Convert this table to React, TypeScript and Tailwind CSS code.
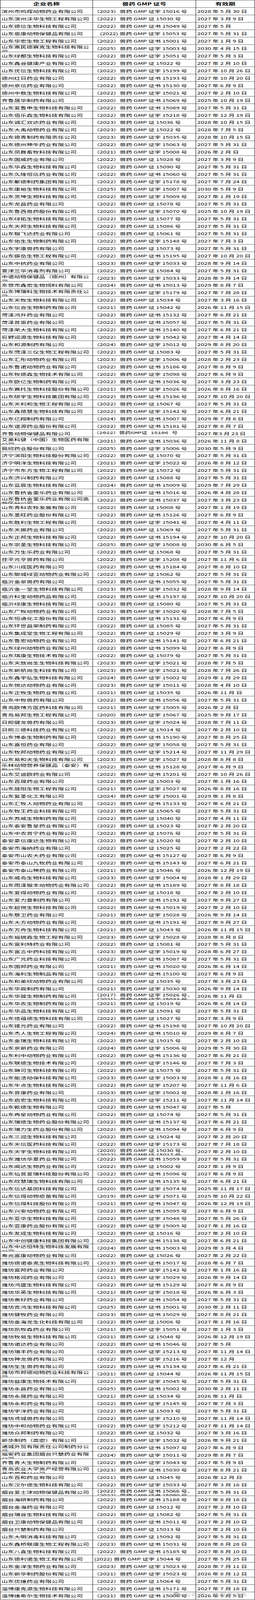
import { useLayoutEffect, useState } from "react";
import { FaWeixin } from "react-icons/fa";

// [企业名称, 证号, 有效期, 特殊样式]
// 证号简写: 年份 + 字/书/空 + 编号，例如 "2023字15016"
// 有效期简写: "2028.5.30"，"2027.5" 表示没有日，"2026.2." 表示日为空
type Row = [string, string, string, string?];

const rows: Row[] = [
  ["滨州市鸣辉动物药业有限公司", "2023字15016", "2028.5.30"],
  ["山东滨州沃华生物工程有限公司", "202215030", "2027.3.9"],
  ["山东德信生物科技有限公司", "2022书15049", "2027.5"],
  ["山东恩康动物保健品有限公司", "(2022) 兽药 GMP 证字 15053 号", "2027.5.31", "indent"],
  ["山东华宏生物工程有限公司", "2022书15001", "2027.1.9"],
  ["山东惠民德赛克生物科技有限公司", "2025字15003", "2030.4.15"],
  ["山东绿都生物科技有限公司", "2022字15051", "2027.5.3"],
  ["山东鑫谷健康产业有限公司", "202215022", "2027.2.10"],
  ["山东优信生物科技有限公司", "2022字15199", "2027.10.26"],
  ["德州红日药业有限公司", "2022书15193", "2027.10.20"],
  ["德州京信药业有限公司", "2022书15130", "2027.6.9"],
  ["德州中敖生物科技有限公司", "2022字15021", "2027.2.10"],
  ["齐鲁晟华制药有限公司", "2020书15069", "2025.10.19"],
  ["山东爱鲁申生物科技有限公司", "2022书15089", "2027.5.31"],
  ["山东佰乐森生物科技有限公司", "2022字15218", "2027.12.19"],
  ["山东诚汇双达药业有限公司", "202315036", "2028.10.15"],
  ["山东大禹动物药业有限公司", "202315022", "2028.7.5"],
  ["山东德青制药有限责任公司", "2023字15035", "2028.10.15"],
  ["山东德州神牛药业有限公司", "2022字15063", "2027.5.31"],
  ["山东凤舞畜牧科技有限公司", "2021字15008", "2026.2."],
  ["山东国威药业有限公司", "202215028", "2027.3.9"],
  ["山东华森生物科技有限公司", "202215090", "2027.5.31"],
  ["山东久隆恒信药业有限公司", "2022书15060", "2027.5.31"],
  ["山东聚德制药集团有限公司", "2022字15178", "2027.7.24"],
  ["山东康裕生物科技有限公司", "2025字15007", "2030.5.9"],
  ["山东灵坤生物科技有限公司", "2022字15009", "2027.1.19"],
  ["山东龙昌药业有限公司", "202215078", "2027.5.31"],
  ["山东鲁西兽药股份有限公司", "2020字15070", "2025.10.19"],
  ["山东绿拓生物科技有限公司", "202215077", "2027.5.31"],
  ["山东天邦生物科技有限公司", "202215086", "2027.5.31"],
  ["山东银飞达药业有限公司", "202215061", "2027.5.31"],
  ["山东佑生生物制药有限公司", "2022字15148", "2027.7.3"],
  ["山东宇康兽药有限公司", "202215073", "2027.5.31"],
  ["山东振岳生物工程有限公司", "2022书15195", "2027.10.20"],
  ["山东中抗药业有限公司", "2023字15033", "2028.9.14"],
  ["夏津兰华消毒剂有限公司", "202215084", "2027.5.31"],
  ["中诺动物保健品（德州）有限公司", "2023字15033", "2028.9.14"],
  ["东营市鑫宏生物饲料有限公司", "2024书15013", "2029.8.7"],
  ["山东博瑞科生物技术有限责任公司", "2022字15179", "2027.7.28"],
  ["山东天牧生物科技有限公司", "202215034", "2027.3.16"],
  ["山东信合生物制药有限公司", "202115042", "2026.11.15"],
  ["菏泽鸿升药业有限公司", "2022书15132", "2027.6.21"],
  ["菏泽普恩药业有限公司", "2022书15057", "2027.5.31"],
  ["菏泽荣大生物科技有限公司", "2022书15140", "2027.6.21"],
  ["巨野润源生物科技有限公司", "2022字15042", "2027.4.14"],
  ["山东和源制药有限公司", "2024字15012", "2029.8.20"],
  ["山东菏泽三仪生物工程有限公司", "202215083", "2027.5.31"],
  ["山东汇彤动物药业有限公司", "2023字15006", "2028.2.23"],
  ["山东鲁诺动物药业有限公司", "2022书15186", "2027.8.9"],
  ["山东牧德森生物技术有限公司", "2022字15098", "2027.6.9"],
  ["山东欧亿生物制药有限公司", "2022书15036", "2027.3.23"],
  ["山东赛托生物科技股份有限公司", "2021字15026", "2026.8.16"],
  ["山东硕宇生物科技集团有限公司", "2022书15196", "2027.10.20"],
  ["山东天利和生物工程有限公司", "202215067", "2027.5.31"],
  ["山东鑫德慧生物科技有限公司", "2022字15142", "2027.6.21"],
  ["山东亿翔制药有限公司", "2024书15007", "2029.7.8"],
  ["山东谊源药业股份有限公司", "2022书15181", "2027.8.7"],
  ["齐鲁动物保健品有限公司", "（2022）兽药GMP证 15106 号", "2027 年3 月 23 日", "mono"],
  ["艾美科健（中国）生物医药有限公司", "2021书15036", "2026.11.8"],
  ["辰欣药业股份有限公司", "2025字15006", "2030.5.9"],
  ["济宁滨阳生物科技股份有限公司", "202215070", "2027.5.31"],
  ["济宁明洋生物科技有限公司", "2021字15022", "2026.8.12"],
  ["济宁市东方生物工程有限公司", "202215072", "2027.5.31"],
  ["山东济兴制药有限公司", "202215088", "2027.5.31"],
  ["山东蓝辰生物科技有限公司", "2024书15009", "2029.7.29"],
  ["山东鲁抗舍里乐药业有限公司", "2021书15016", "2026.4.28"],
  ["山东鲁抗舍里乐药业有限公司高新区分公司", "2022书15037", "2027.3.23"],
  ["山东青科农牧发展有限公司", "202215008", "2027.1.19"],
  ["山东圣旺药业股份有限公司", "2022书15126", "2027.6.9"],
  ["山东胜利生物工程有限公司", "2022字15041", "2027.4.11"],
  ["山东天振药业有限公司", "202215069", "2027.5.31"],
  ["山东正邦生物科技有限公司", "2022书15194", "2027.10.20"],
  ["山东宗圣生物科技有限公司", "2025字15008", "2030.6.5"],
  ["山东万生乐药业有限公司", "202215068", "2027.5.31"],
  ["茌平元亨兽药有限公司", "2022字15208", "2027.11.6"],
  ["山东川成医药有限公司", "2022书15184", "2027.8.10"],
  ["山东聊城绿亚动物药业有限公司", "202215062", "2027.5.31"],
  ["临沂金翠兽药有限公司", "2022书15055", "2027.5.31"],
  ["临沂金一堂生物科技有限公司", "2023字15032", "2028.9.14"],
  ["临沂科宝动物药品有限公司", "2022书15197", "2027.10.20"],
  ["临沂绿康生物科技有限公司", "202215080", "2027.5.31"],
  ["山东广牧动物药业有限公司", "2023字15020", "2028.7.5"],
  ["山东恒通化工股份有限公司", "2022书15131", "2027.6.9"],
  ["山东环世昌荣制药有限公司", "202215085", "2027.5.31"],
  ["山东集成堂生物工程有限公司", "202215029", "2027.3.9"],
  ["山东鲁宏动物药业有限公司", "2022书15141", "2027.6.21"],
  ["山东绿州动物药业有限公司", "2022书15099", "2027.6.9"],
  ["山东琪康生物技术有限公司", "202215079", "2027.5.31"],
  ["山东天放尚生生物科技有限公司", "2023字15021", "2028.7.5"],
  ["山东新航尚生科技有限公司", "2023字15021", "2028.7.26"],
  ["山东鑫宇弘生物科技有限公司", "2024字15002", "2029.1.29"],
  ["山东悦达动物药业有限公司", "2023字15011", "2028.4.10"],
  ["山东正牧生物药业有限公司", "202115035", "2026.11."],
  ["山东中牧兽药有限公司", "2022书15056", "2027.5.31"],
  ["青岛欧博方医药科技有限公司", "2021字15005", "2026.2."],
  ["青岛易邦生物工程有限公司", "2020字15067", "2025.9.17"],
  ["日照健龙兽药有限公司", "2023字15024", "2028.7.11"],
  ["日照三德科技药业有限公司", "202215014", "2027.2.10"],
  ["山东博泰生物制药有限公司", "2022书15190", "2027.8.25"],
  ["山东嘉恒药业有限公司", "2022字15058", "2027.5.31"],
  ["山东牧邦动物药业有限公司", "2022字15214", "2027.11.29"],
  ["山东易和天生物科技有限公司", "2023字15027", "2028.8.8"],
  ["乐林动物营养保健品（泰安）有限公司", "2022书15128", "2027.6.9"],
  ["山东艾迪欧药业有限公司", "2022书15201", "2027.10.26"],
  ["山东百晟药业有限公司", "202215003", "2027.1.16"],
  ["山东晟阳生物工程有限公司", "2021字15027", "2026.8.16"],
  ["山东复圣化工有限公司", "2024字15001", "2029.1.8"],
  ["山东汇牧人动物药业有限公司", "2022书15133", "2027.6.21"],
  ["山东牧王药业科技有限公司", "202215065", "2027.5.31"],
  ["山东苏威生物制药有限公司", "202215040", "2027.4.11"],
  ["山东泰安鲁星药业有限公司", "202215023", "2027.2.20"],
  ["山东中农普宁药业有限公司", "202215076", "2027.5.31"],
  ["泰安豪信康达生物有限公司", "202215020", "2027.2.10"],
  ["泰安市海纳药业有限公司", "202215025", "2027.2.22"],
  ["泰安市山农大药业有限公司", "2022书15127", "2027.6.9"],
  ["泰安市泰山九牧药业有限公司", "2022书15143", "2027.6.21"],
  ["泰安市泰山神药业有限公司", "202115046", "2026.12.19"],
  ["山东威岛生物科技有限公司", "2023字15004", "2028.1.29"],
  ["山东雨泽银丰动物药业有限公司", "2022书15189", "2027.8.18"],
  ["山东爱得动物药业有限公司", "202215018", "2027.2.10"],
  ["山东爱力曼制药有限公司", "2022书15192", "2027.9.27"],
  ["山东超悦生物科技有限公司", "2022书15019", "2027.2.10"],
  ["山东慈卫药业有限公司", "2021字15028", "2026.9.14"],
  ["山东大方动物药业有限公司", "2022书15191", "2027.9.27"],
  ["山东方舟生物科技有限公司", "202115043", "2026.11.15"],
  ["山东福锐森生物工程有限公司", "2023字15028", "2028.8.8"],
  ["山东富利特药业有限公司", "202215081", "2027.5.31"],
  ["山东富言中药科技有限公司", "2023字15019", "2028.6.27"],
  ["山东广元药业科技有限公司", "2022书15087", "2027.5.31"],
  ["山东国邦药业有限公司", "2021书15020", "2026.6.14"],
  ["山东海利生物制品有限公司", "2022书15100", "2027.6.9"],
  ["山东和美欣动物药业有限公司", "202215035", "2027.3.23"],
  ["山东华辰制药有限公司", "2021字15030", "2026.9.14"],
  ["山东华骏生物制药有限公司", "（2017）兽药 GMP 证字 15026 号、（2021）兽药 GMP 证字 15033 号", "2026.11."],
  ["山东华农生物制药有限公司", "202115019", "2026.6.14"],
  ["山东华品生物科技有限公司", "202215091", "2027.5.31"],
  ["山东佳蕴德生物科技有限公司", "202215027", "2027.3.9"],
  ["山东建元药业有限公司", "2022书15198", "2027.10.20"],
  ["山东杰人生物工程有限公司", "2024书15010", "2029.8.7"],
  ["山东金瑞生物科技有限公司", "202215015", "2027.2.10"],
  ["山东京新药业有限公司", "2024字15006", "2029.5.30"],
  ["山东利中动物药业有限公司", "2022书15136", "2027.6.21"],
  ["山东联德生物技术有限公司", "2022字15146", "2027.7.3"],
  ["山东琳可生物科技有限公司", "202215075", "2027.5.31"],
  ["山东能洁动保科技有限公司", "2023字15003", "2028.1.16"],
  ["山东牛点生物科技有限公司", "2022字15207", "2027.11.6"],
  ["山东普康药业有限公司", "2023字15002", "2028.1.16"],
  ["山东启宏生物科技有限公司", "2022字15211", "2027.11.14"],
  ["山东乾德生物有限公司", "2022书15047", "2027.5"],
  ["山东冉星动物药业有限公司", "202215074", "2027.5.31"],
  ["山东瑞德生物药业股份有限公司", "2022书15137", "2027.6.21"],
  ["山东瑞力生药业股份有限公司", "2022书15094", "2027.6.9"],
  ["山东三润生物科技有限公司", "202215024", "2027.2.20"],
  ["山东天信医药科技有限公司", "2022字15173", "2027.7.18"],
  ["山东天宇生物科技有限公司", "（2020）兽药 GMP 证 15030 号、（2022）兽药 GMP 证 15017 号", "2027.2.10"],
  ["山东潍坊华夏药业有限公司", "2022书15059", "2027.5.31"],
  ["山东闻达生物药业有限公司", "202215002", "2027.1.9"],
  ["山东仙普爱瑞科技股份有限公司", "2022书15096", "2027.6.9"],
  ["山东欣慧瑞生物科技有限公司", "2022书15135", "2027.6.21"],
  ["山东信达基因科技有限公司", "2020字15074", "2025.11.17"],
  ["山东信得动物疫苗有限公司", "2019字15071", "2025.10.22"],
  ["山东信得科技股份有限公司", "2021书15047", "2026.12.19"],
  ["山东兴安动物药业有限公司", "2022书15095", "2027.6.9"],
  ["山东亚华生物科技有限公司", "2022字15048", "2027.5.26"],
  ["山东亚康药业股份有限公司", "2022字15005", "2027.1.16"],
  ["山东友成生物科技有限公司", "202215016", "2027.2.10"],
  ["山东中创健康科技集团有限公司", "2022书15138", "2027.6.21"],
  ["山东中达恒特生物科技发展有限公司", "2024书15003", "2029.3.4"],
  ["寿光富康动物药业有限公司", "202215026", "2027.2.22"],
  ["潍坊德诺泰克生物科技有限公司", "2023书15017", "2028.6.7"],
  ["潍坊富邦药业有限公司", "2022字15142", "2027.1.16"],
  ["潍坊格润药业有限公司", "2021字15029", "2026.9.14"],
  ["潍坊鸿盛生物科技有限公司", "2022书15129", "2027.6.9"],
  ["潍坊华英生物科技有限公司", "2021字15018", "2026.6.3"],
  ["潍坊惠好药业有限公司", "2022书15054", "2027.5.31"],
  ["潍坊吉鸿生物科技有限公司", "2025书15001", "2030.2.11"],
  ["潍坊健牧药业有限公司", "2023书15029", "2027.8.21"],
  ["潍坊金海龙生化科技有限公司", "202215006", "2027.1.16"],
  ["潍坊凯牧森药业有限公司", "2021字15051", "2027.1.3"],
  ["潍坊牧易生物科技有限公司", "202115048", "2026.12.19"],
  ["潍坊诺达药业有限公司", "2022书15046", "2027.5"],
  ["潍坊瑞丰药业有限公司", "2022字15213", "2027.11.14"],
  ["潍坊神龙兽药有限公司", "2022字15216", "2027.12"],
  ["潍坊生生兽药有限公司", "2022书15134", "2027.6.21"],
  ["潍坊市邦德动物药业科技有限公司", "202115044", "2026.11.15"],
  ["潍坊益康生物技术有限公司", "2022字15045", "2027.5.31"],
  ["潍坊永昌药业有限公司", "2025书15002", "2030.2.11"],
  ["潍坊永晟药业有限公司", "202115034", "2026.11."],
  ["潍坊永和药业有限公司", "2022字15145", "2027.7.3"],
  ["潍坊宇洋药业有限公司", "202215093", "2027.5.31"],
  ["潍坊鸢城兽药有限公司", "2022字15210", "2027.11.14"],
  ["潍坊中和动物药业有限公司", "2022字15212", "2027.11.14"],
  ["潍坊众邦制药有限公司", "202215032", "2027.3.16"],
  ["新华制药（高密）有限公司", "2021字15032", "2026.9.21"],
  ["诸城外贸有限责任公司制药分公司", "2022书15097", "2027.6.9"],
  ["福安药业集团烟台只楚药业有限公司", "2024字15011", "2029.8.7"],
  ["齐鲁青大生物制药有限公司", "2022字15043", "2027.5.9"],
  ["青岛农业大学资产经营有限公司莱农兽药分公司", "2023书15030", "2027.8.21"],
  ["山东百和药业有限公司", "202115045", "2026.12."],
  ["山东汉尔德生物科技有限公司", "2022字15033", "2027.3.16"],
  ["烟台爱士津动物保健品有限公司", "（2022）兽药 GMP 证书 15066 号、（2022）兽药 GMP 证书 15090 号", "2027.5.31"],
  ["烟台海研制药有限公司", "2022书15188", "2027.8.18"],
  ["烟台金海药业有限公司", "202215012", "2027.2.10"],
  ["烟台瑞谷生物科技有限公司", "202215082", "2027.5.31"],
  ["烟台卫康动物保健品有限公司", "2022书15011", "2027.2.10"],
  ["烟台只楚制药有限公司", "202215013", "2027.2.10"],
  ["山东大明消毒科技有限公司", "202215092", "2027.5.31"],
  ["山东鑫桥联康生物工程有限公司", "2023书15031", "2028.8.28"],
  ["山东八喜生物科技有限公司", "2022书15185", "2027.8.10"],
  ["山东德利诺生物工程有限公司", "(2022) 兽药 GMP 证字 15044 号", "2027.5.25", "flush"],
  ["山东金洋生物药业有限公司", "2023字15023", "2028.7.11"],
  ["山东新华制药股份有限公司", "2021字15023", "2026.8.12"],
  ["山东优维药业有限公司", "202215064", "2027.5.31"],
  ["淄博康克源生物科技有限公司", "2022书15171", "2027.7.18"],
  ["淄博维希尔生物技术有限公司", "2021书15006", "2026.5.5"],
];

const PAGE_HEIGHT = 6915;

const cert = (c: string) => {
  if (c.includes("兽药")) return c;
  const year = c.slice(0, 4);
  const num = c.slice(-5);
  const mid = c.slice(4, -5);
  return `（${year}）兽药 GMP 证${mid} ${num} 号`;
};

const date = (d: string) => {
  if (d.includes("年")) return d;
  const [y, m, day] = d.split(".");
  if (day === undefined) return `${y} 年 ${m} 月`;
  if (day === "") return `${y} 年 ${m} 月 日`;
  return `${y} 年 ${m} 月 ${day} 日`;
};

const cell =
  "h-[32px] overflow-hidden border-r border-b border-black flex [align-items:safe_center] leading-[20px]";

const App = () => {
  // the window may be shorter than the full sheet; squeeze the sheet so it fits
  const [scale, setScale] = useState(1);
  useLayoutEffect(() => {
    setScale(Math.min(1, window.innerHeight / PAGE_HEIGHT));
  }, []);

  return (
    <div className="w-[653px] overflow-hidden bg-white" style={{ height: PAGE_HEIGHT * scale }}>
      <div
        className="relative w-[653px] h-[6915px] origin-top bg-white text-black font-['Noto_Sans_CJK_SC',sans-serif] text-[16px]"
        style={{ transform: `scaleY(${scale})` }}
      >
        <div className="grid grid-cols-[237px_264px_1fr] border-t border-l border-black">
          <div className={`${cell} justify-center font-bold text-[17px]`}>企业名称</div>
          <div className={`${cell} justify-center font-bold text-[17px]`}>兽药 GMP 证号</div>
          <div className={`${cell} justify-center font-bold text-[17px]`}>有效期</div>

          {rows.map(([name, c, d, style], i) => (
            <div key={i} className="contents">
              <div className={`${cell} pl-[3px]`}>
                <span>{name}</span>
              </div>
              <div
                className={`${cell} ${
                  style === "indent" ? "pl-[18px]" : style === "flush" ? "pl-[3px]" : "pl-[1px]"
                } ${style === "mono" ? "font-['Liberation_Mono','Noto_Sans_CJK_SC',monospace] text-[15px]" : ""}`}
              >
                <span>{cert(c)}</span>
              </div>
              <div className={`${cell} pl-[3px]`}>
                <span>{date(d)}</span>
              </div>
            </div>
          ))}
        </div>

        {/* watermark */}
        <div className="absolute right-[20px] bottom-[14px] flex items-center gap-[6px] text-[rgba(140,140,140,0.6)] pointer-events-none">
          <FaWeixin className="w-[22px] h-[22px]" />
          <span className="text-[18px] leading-none">公众号：猪事茶话会</span>
        </div>
      </div>
    </div>
  );
};

export default App;
